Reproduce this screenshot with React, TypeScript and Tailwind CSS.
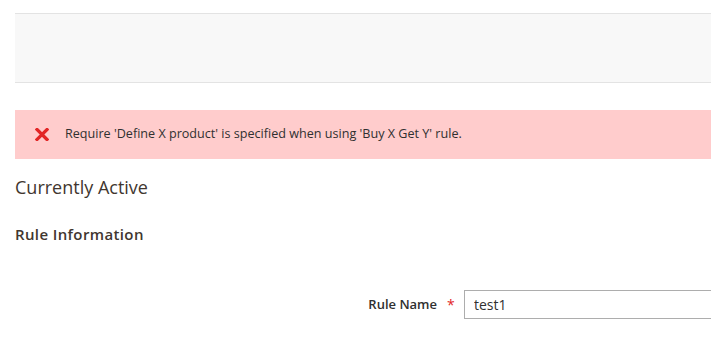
const font = { fontFamily: '"Open Sans", "Liberation Sans", sans-serif' };

const ErrorIcon = () => (
  <svg width="14" height="13" viewBox="0 0 14 13" className="shrink-0">
    <path d="M2 1.5 L12 11.5 M12 1.5 L2 11.5" stroke="#e22626" strokeWidth="3.2" strokeLinecap="square" />
  </svg>
);

export default function App() {
  return (
    <div className="h-[339px] w-[711px] overflow-hidden bg-white pl-[15px] text-[#303030]" style={font}>
      <div className="mt-[13px] h-[70px] border-y border-[#e3e3e3] bg-[#f8f8f8]" />

      <div className="mt-[27px] flex h-[49px] items-center gap-[16px] bg-[#ffcccc] pl-[20px] text-[12.6px]">
        <ErrorIcon />
        <span>Require 'Define X product' is specified when using 'Buy X Get Y' rule.</span>
      </div>

      <h1 className="mt-[16px] text-[18px] leading-[24px] text-[#41362f]">Currently Active</h1>

      <h2 className="mt-[23px] text-[15px] font-semibold leading-[24px] tracking-[0.025em] text-[#41362f]">
        Rule Information
      </h2>

      <div className="mt-[44px] flex items-center">
        <label className="w-[422px] shrink-0 text-right text-[13px] font-semibold">Rule Name</label>
        <span className="ml-[10px] w-[17px] shrink-0 text-[14px] text-[#e22626]">*</span>
        <input
          readOnly
          value="test1"
          className="h-[29px] w-[320px] shrink-0 border border-[#adadad] bg-white px-[9px] text-[14px] text-[#303030] outline-none"
        />
      </div>
    </div>
  );
}
